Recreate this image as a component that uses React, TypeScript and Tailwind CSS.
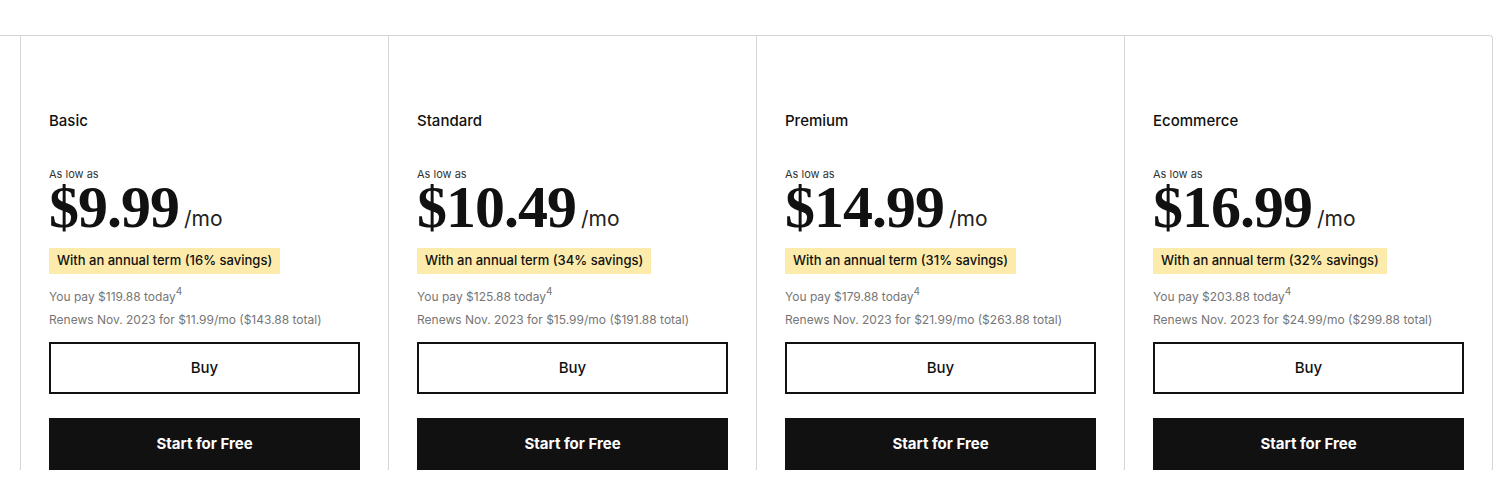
import React from "react";

const plans = [
  { name: "Basic", price: "$9.99", save: "16%", pay: "$119.88", renew: "$11.99/mo ($143.88 total)" },
  { name: "Standard", price: "$10.49", save: "34%", pay: "$125.88", renew: "$15.99/mo ($191.88 total)" },
  { name: "Premium", price: "$14.99", save: "31%", pay: "$179.88", renew: "$21.99/mo ($263.88 total)" },
  { name: "Ecommerce", price: "$16.99", save: "32%", pay: "$203.88", renew: "$24.99/mo ($299.88 total)" },
];

function Card({ p, last }: { p: (typeof plans)[number]; last: boolean }) {
  return (
    <div
      className={`shrink-0 border-l border-t border-[#d6d6d6] px-[28px] pt-[75px] ${
        last ? "w-[369px] border-r rounded-tr-[4px]" : "w-[368px]"
      }`}
    >
      <div className="text-[15px] leading-[20px] font-medium text-[#111]">{p.name}</div>
      <div className="mt-[36px] text-[11px] leading-[14px] text-[#333]">As low as</div>
      <div className="mt-[2px] flex items-baseline h-[48px] leading-[48px]">
        <span
          className="text-[60px] font-bold text-[#111] tracking-[-1px]"
          style={{ fontFamily: '"Liberation Serif", "Times New Roman", serif' }}
        >
          {p.price}
        </span>
        <span className="ml-[5px] text-[21px] text-[#222] relative -top-[1px]">/mo</span>
      </div>
      <div className="mt-[17px] inline-flex h-[26px] items-center bg-[#fcebab] px-[8px] text-[13px] font-medium text-[#111]">
        With an annual term ({p.save} savings)
      </div>
      <div className="mt-[13px] h-[18px] text-[12px] leading-[18px] text-[#767676]">
        You pay {p.pay} today
        <sup className="relative -top-[1px] text-[10px] leading-none align-super">4</sup>
      </div>
      <div className="mt-[6px] text-[12px] leading-[18px] text-[#767676]">Renews Nov. 2023 for {p.renew}</div>
      <button className="mt-[13px] flex h-[52px] w-full items-center justify-center border-2 border-[#111] bg-white text-[15px] font-medium text-[#111]">
        Buy
      </button>
      <button className="mt-[24px] flex h-[52px] w-full items-center justify-center bg-[#111] text-[15px] font-bold text-white">
        Start for Free
      </button>
    </div>
  );
}

export default function App() {
  return (
    <div
      className="h-[486px] w-[1510px] overflow-hidden bg-white"
      style={{ fontFamily: 'Inter, "Liberation Sans", sans-serif' }}
    >
      <div className="mt-[35px] flex">
        <div className="w-[20px] shrink-0 border-t border-[#d6d6d6]" />
        {plans.map((p, i) => (
          <Card key={p.name} p={p} last={i === plans.length - 1} />
        ))}
      </div>
    </div>
  );
}
